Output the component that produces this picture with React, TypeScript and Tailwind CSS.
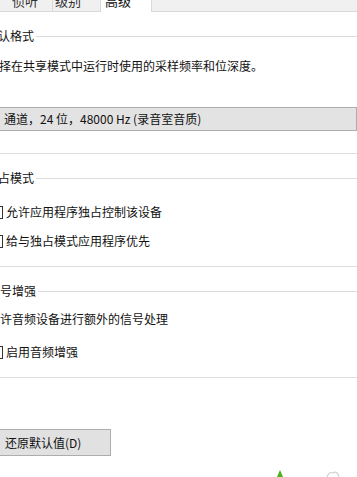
import React from "react";

const GroupTitle = ({ text, shift }: { text: string; shift: string }) => (
  <div className="flex items-center h-[16px]">
    <span className={`${shift} whitespace-nowrap leading-[16px] shrink-0`}>{text}</span>
    <div className="ml-[2px] flex-1 h-px bg-[#dcdcdc]" />
  </div>
);

const Check = ({ label }: { label: string }) => (
  <div className="flex items-center h-[16px]">
    <div className="-ml-[10px] w-[13px] h-[13px] border border-[#333] bg-white shrink-0" />
    <span className="ml-[3px] whitespace-nowrap leading-[16px]">{label}</span>
  </div>
);

const Rule = () => <div className="h-px bg-[#dcdcdc]" />;

export default function App() {
  return (
    <div className="relative w-[357px] h-[477px] overflow-hidden bg-white text-[12px] text-[#111] font-['Noto_Sans_CJK_SC',sans-serif]">
      {/* tab strip, only the bottom of it shows */}
      <div className="flex h-[12px] bg-[#f0f0f0] border-b border-[#d9d9d9]">
        <div className="w-[53px] shrink-0 border-r border-[#d9d9d9] pl-[12px] overflow-hidden">
          <div className="-mt-[7px] leading-[16px] text-[13px] text-[#333]">侦听</div>
        </div>
        <div className="w-[47px] shrink-0 pl-[2px] overflow-hidden">
          <div className="-mt-[7px] leading-[16px] text-[13px] text-[#333]">级别</div>
        </div>
        <div className="w-[52px] shrink-0 h-[12px] bg-white border-x border-[#d9d9d9] pl-[4px] overflow-hidden relative z-10">
          <div className="-mt-[7px] leading-[16px] text-[13px]">高级</div>
        </div>
        <div className="flex-1" />
      </div>

      <div className="mt-[16px]">
        <GroupTitle text="默认格式" shift="-ml-[14px]" />
      </div>
      <div className="mt-[14px] -ml-[13px] leading-[16px] whitespace-nowrap">
        选择在共享模式中运行时使用的采样频率和位深度。
      </div>

      <div className="mt-[33px] -ml-[10px] h-[24px] bg-[#e3e3e3] border border-[#adadad] flex items-center pl-[13px] whitespace-nowrap">
        通道，24 位，48000 Hz (录音室音质)
      </div>

      <div className="mt-[22px]">
        <Rule />
      </div>

      <div className="mt-[16px]">
        <GroupTitle text="独占模式" shift="-ml-[14px]" />
      </div>
      <div className="mt-[18px]">
        <Check label="允许应用程序独占控制该设备" />
      </div>
      <div className="mt-[13px]">
        <Check label="给与独占模式应用程序优先" />
      </div>

      <div className="mt-[17px]">
        <Rule />
      </div>

      <div className="mt-[16px]">
        <GroupTitle text="信号增强" shift="-ml-[12px]" />
      </div>
      <div className="mt-[12px] -ml-[12px] leading-[16px] whitespace-nowrap">
        允许音频设备进行额外的信号处理
      </div>
      <div className="mt-[17px]">
        <Check label="启用音频增强" />
      </div>

      <div className="mt-[17px]">
        <Rule />
      </div>

      <div className="mt-[51px]">
        <button className="-ml-[8px] w-[119px] h-[27px] bg-[#e1e1e1] border border-[#adadad] text-left pl-[12px] text-[12px] leading-[16px]">
          还原默认值(D)
        </button>
      </div>

      {/* partly visible icons at the bottom edge */}
      <svg className="absolute left-[276px] top-[469px]" width="8" height="8" viewBox="0 0 8 8">
        <path d="M4 1 L7 8 L1 8 Z" fill="#4caf1a" />
      </svg>
      <svg className="absolute left-[325px] top-[470px]" width="16" height="7" viewBox="0 0 16 7">
        <path d="M2 7 Q4 1 8 3 Q12 0 14 7" fill="none" stroke="#d0d0d0" strokeWidth="1.2" />
      </svg>
    </div>
  );
}
